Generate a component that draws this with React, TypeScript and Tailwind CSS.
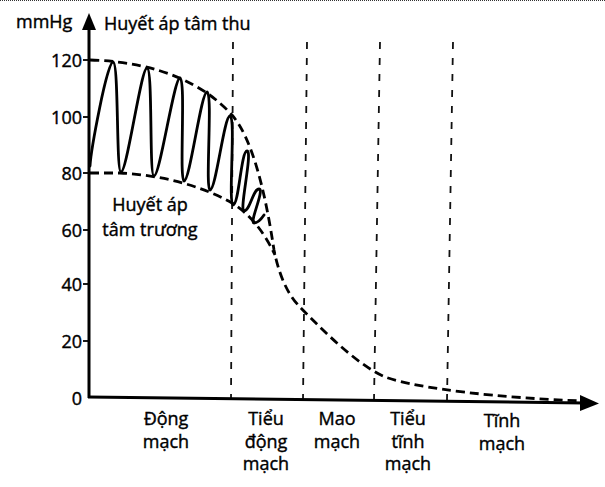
const FONT = "'Open Sans', 'Liberation Sans', sans-serif"

const ticks = [
  { v: "120", y: 60 },
  { v: "100", y: 117 },
  { v: "80", y: 173 },
  { v: "60", y: 230 },
  { v: "40", y: 284 },
  { v: "20", y: 341 },
]

// vertical separators between vessel sections (top x, bottom x)
const separators = [
  [233, 231],
  [307, 303],
  [380, 374],
  [453, 447],
]

const sections = [
  { x: 166, lines: ["Động", "mạch"], y: 425 },
  { x: 266, lines: ["Tiểu", "động", "mạch"], y: 425 },
  { x: 337, lines: ["Mao", "mạch"], y: 425 },
  { x: 408, lines: ["Tiểu", "tĩnh", "mạch"], y: 425 },
  { x: 502, lines: ["Tĩnh", "mạch"], y: 427 },
]

// pulse wave: peaks and the troughs that follow them
const peaks = [[113, 62], [147, 68], [180, 78], [207, 92], [230, 116], [247, 151], [259, 189]]
const troughs = [[121, 172], [154, 176], [184, 181], [210, 190], [233, 205], [244, 211], [254, 223]]

function pulsePath() {
  let d = "M 90 166"
  let prev = [90, 166]
  peaks.forEach((p, i) => {
    const c1 = i === 0 ? "91 150" : `${prev[0] + 6} ${prev[1]}`
    d += ` C ${c1} ${p[0] - 6} ${p[1]} ${p[0]} ${p[1]}`
    const b = troughs[i]
    d += ` C ${p[0] + 6} ${p[1]} ${b[0] - 5} ${b[1]} ${b[0]} ${b[1]}`
    prev = b
  })
  return d + " C 258 223 262 218 264 215"
}

const txt = { fontFamily: FONT, fontSize: 18, fill: "#000", stroke: "#000", strokeWidth: 0.4 }

export default function App() {
  return (
    <div className="w-[605px] h-[487px] bg-white border-t border-dotted border-[#333] overflow-hidden">
      <svg width="605" height="486" viewBox="0 1 605 486" className="block">
        {/* section separators */}
        {separators.map(([t, b], i) => (
          <line key={i} x1={t} y1={42} x2={b} y2={400} stroke="#111" strokeWidth={1.8} strokeDasharray="7 9" />
        ))}

        {/* axes */}
        <line x1={89} y1={24} x2={89} y2={398} stroke="#000" strokeWidth={3} />
        <polygon points="89,13 82,30 96,30" fill="#000" />
        <line x1={88} y1={397} x2={584} y2={403} stroke="#000" strokeWidth={3} />
        <polygon points="599,403.5 580,395 580,411" fill="#000" />

        {ticks.map((t) => (
          <g key={t.v}>
            <line x1={83} y1={t.y} x2={89} y2={t.y} stroke="#000" strokeWidth={1.8} />
            <text x={82} y={t.y + 6.5} textAnchor="end" {...txt}>
              {t.v}
            </text>
          </g>
        ))}
        <text x={82} y={405} textAnchor="end" {...txt}>0</text>

        {/* envelopes */}
        <path
          d="M 90 60 C 160 62, 205 85, 232 115 C 252 138, 265 190, 274 250 C 280 280, 290 297, 300 307 C 330 338, 360 366, 385 377 C 420 389, 500 398, 585 401"
          fill="none" stroke="#000" strokeWidth={2.8} strokeDasharray="9 5"
        />
        <path
          d="M 90 173 L 120 173 C 160 175, 200 185, 232 203 C 248 213, 262 228, 275 255"
          fill="none" stroke="#000" strokeWidth={2.8} strokeDasharray="9 5"
        />

        {/* pulse wave */}
        <path d={pulsePath()} fill="none" stroke="#000" strokeWidth={2.8} strokeLinejoin="round" strokeLinecap="round" />

        {/* labels */}
        <text x={16} y={28} {...txt}>mmHg</text>
        <text x={104} y={30} {...txt}>Huyết áp tâm thu</text>
        <text x={150} y={211} textAnchor="middle" {...txt}>Huyết áp</text>
        <text x={150} y={236} textAnchor="middle" {...txt}>tâm trương</text>

        {sections.map((s) => (
          <text key={s.x} textAnchor="middle" {...txt}>
            {s.lines.map((l, i) => (
              <tspan key={i} x={s.x} y={s.y + i * 22.5}>
                {l}
              </tspan>
            ))}
          </text>
        ))}
      </svg>
    </div>
  )
}
